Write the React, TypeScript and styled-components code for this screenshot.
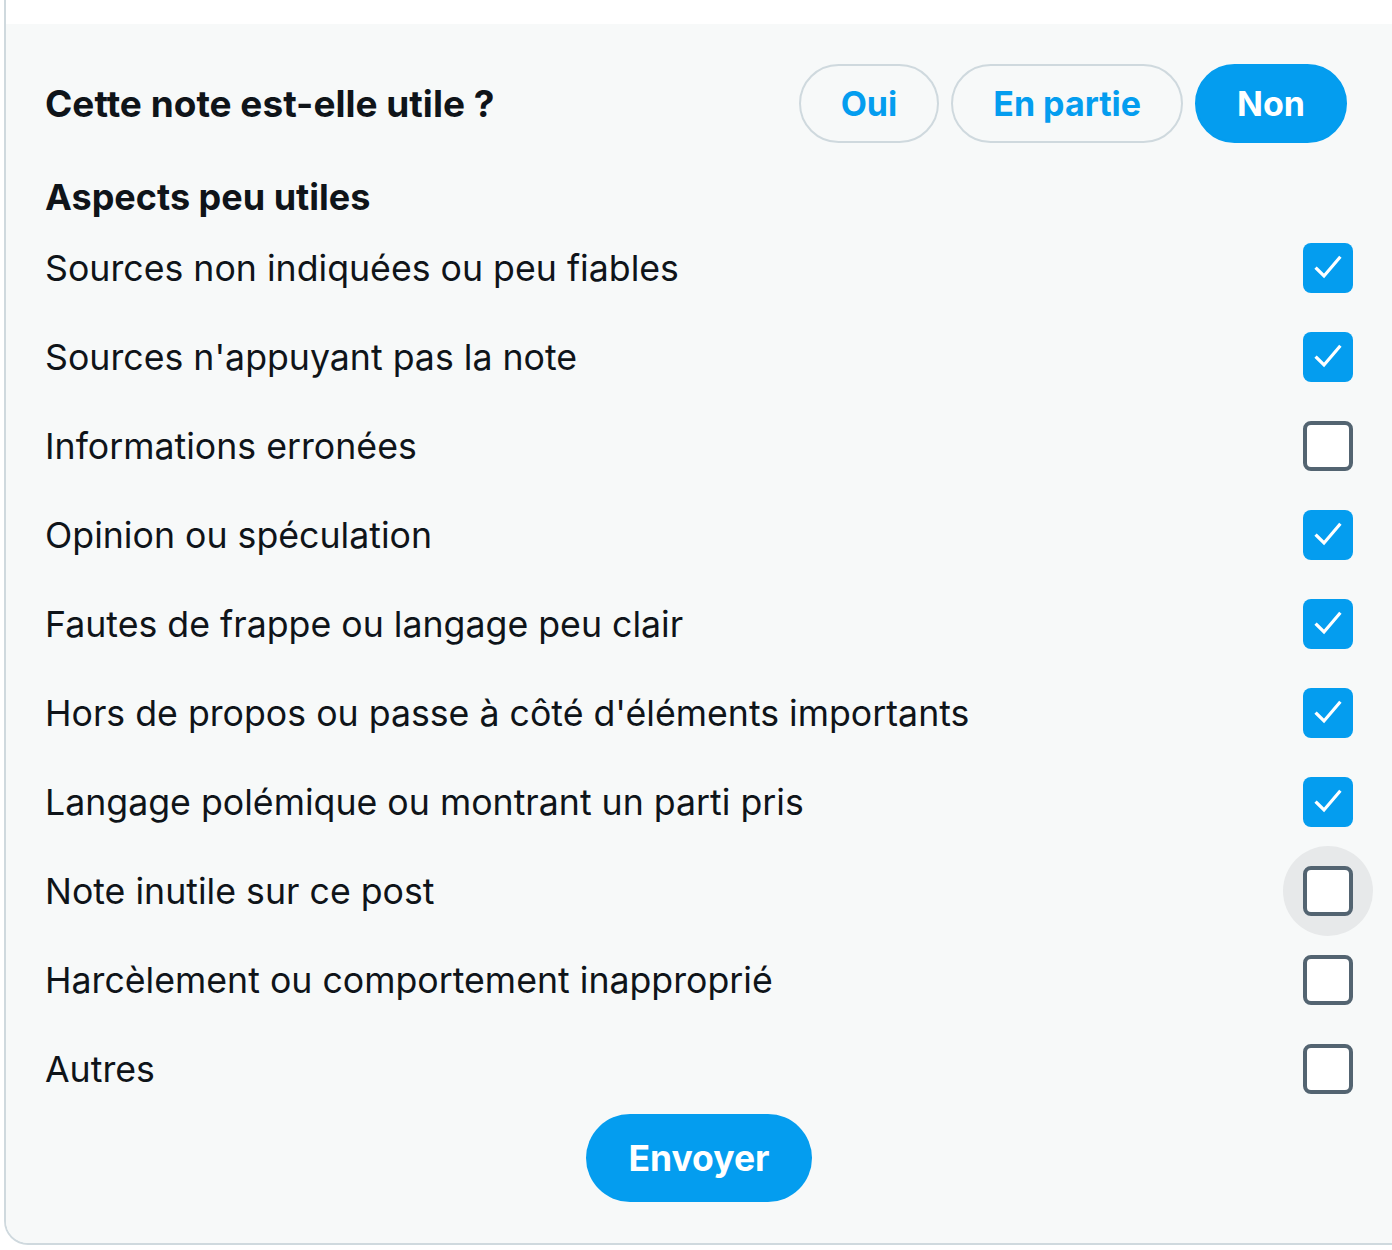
import React, { useState } from "react";
import styled, { createGlobalStyle } from "styled-components";

const BLUE = "#049def";

const Global = createGlobalStyle`
  html, body { margin: 0; padding: 0; background: #ffffff; overflow: hidden; }
  body { font-family: Inter, "Noto Sans", "Liberation Sans", sans-serif; color: #0f1419; }
  * { box-sizing: border-box; }
`;

const Frame = styled.div`
  margin-left: 4px;
  width: 1420px;
  padding-top: 24px;
  border-left: 2px solid #cfd9de;
  border-bottom: 2px solid #cfd9de;
  border-bottom-left-radius: 24px;
  background: #ffffff;
  overflow: hidden;
`;

const Panel = styled.section`
  background: #f7f9f9;
  padding: 40px 39px 41px 39px;
  width: 1386px;
  display: flex;
  flex-direction: column;
`;

const HeaderRow = styled.div`
  display: flex;
  align-items: center;
  justify-content: space-between;
  padding-right: 6px;
`;

const Title = styled.h2`
  margin: 0;
  font-size: 37px;
  font-weight: 700;
`;

const Choices = styled.div`
  display: flex;
  gap: 12px;
`;

const Choice = styled.button<{ $active?: boolean }>`
  height: 79px;
  padding: 0 40px;
  border-radius: 999px;
  font-family: inherit;
  font-size: 34px;
  font-weight: 700;
  cursor: pointer;
  border: 2px solid ${(p) => (p.$active ? BLUE : "#cfd9de")};
  background: ${(p) => (p.$active ? BLUE : "transparent")};
  color: ${(p) => (p.$active ? "#ffffff" : BLUE)};
`;

const SectionTitle = styled.h3`
  margin: 32px 0 0 0;
  font-size: 36px;
  font-weight: 700;
  line-height: 44px;
`;

const List = styled.div`
  display: flex;
  flex-direction: column;
  margin-top: 4px;
`;

const Row = styled.label`
  display: flex;
  align-items: center;
  justify-content: space-between;
  height: 89px;
  font-size: 35.7px;
  cursor: pointer;
`;

const BoxWrap = styled.span<{ $hover?: boolean }>`
  width: 90px;
  height: 90px;
  margin-right: -20px;
  border-radius: 50%;
  display: flex;
  align-items: center;
  justify-content: center;
  background: ${(p) => (p.$hover ? "#e7e9ea" : "transparent")};
`;

const Box = styled.span<{ $checked?: boolean }>`
  width: 50px;
  height: 50px;
  border-radius: 8px;
  display: flex;
  align-items: center;
  justify-content: center;
  background: ${(p) => (p.$checked ? BLUE : "#ffffff")};
  border: ${(p) => (p.$checked ? "none" : "4px solid #536471")};
`;

const Footer = styled.div`
  display: flex;
  justify-content: center;
  margin-top: 1px;
`;

const Submit = styled.button`
  height: 88px;
  padding: 0 42px;
  border: none;
  border-radius: 999px;
  background: ${BLUE};
  color: #ffffff;
  font-family: inherit;
  font-size: 35.5px;
  font-weight: 700;
  cursor: pointer;
`;

const Check = () => (
  <svg width="32" height="32" viewBox="0 0 24 24" fill="none">
    <path d="M3.5 12.5l5.5 5.5L20.5 4.5" stroke="#ffffff" strokeWidth="2.4" strokeLinecap="square" />
  </svg>
);

const items: { label: string; checked: boolean; hover?: boolean }[] = [
  { label: "Sources non indiquées ou peu fiables", checked: true },
  { label: "Sources n'appuyant pas la note", checked: true },
  { label: "Informations erronées", checked: false },
  { label: "Opinion ou spéculation", checked: true },
  { label: "Fautes de frappe ou langage peu clair", checked: true },
  { label: "Hors de propos ou passe à côté d'éléments importants", checked: true },
  { label: "Langage polémique ou montrant un parti pris", checked: true },
  { label: "Note inutile sur ce post", checked: false, hover: true },
  { label: "Harcèlement ou comportement inapproprié", checked: false },
  { label: "Autres", checked: false },
];

export default function App() {
  const [state, setState] = useState(items.map((i) => i.checked));
  return (
    <>
      <Global />
      <Frame>
        <Panel>
          <HeaderRow>
            <Title>Cette note est-elle utile ?</Title>
            <Choices>
              <Choice>Oui</Choice>
              <Choice>En partie</Choice>
              <Choice $active>Non</Choice>
            </Choices>
          </HeaderRow>
          <SectionTitle>Aspects peu utiles</SectionTitle>
          <List>
            {items.map((it, i) => (
              <Row key={it.label} onClick={() => setState((s) => s.map((v, j) => (j === i ? !v : v)))}>
                <span>{it.label}</span>
                <BoxWrap $hover={it.hover}>
                  <Box $checked={state[i]}>{state[i] && <Check />}</Box>
                </BoxWrap>
              </Row>
            ))}
          </List>
          <Footer>
            <Submit>Envoyer</Submit>
          </Footer>
        </Panel>
      </Frame>
    </>
  );
}
